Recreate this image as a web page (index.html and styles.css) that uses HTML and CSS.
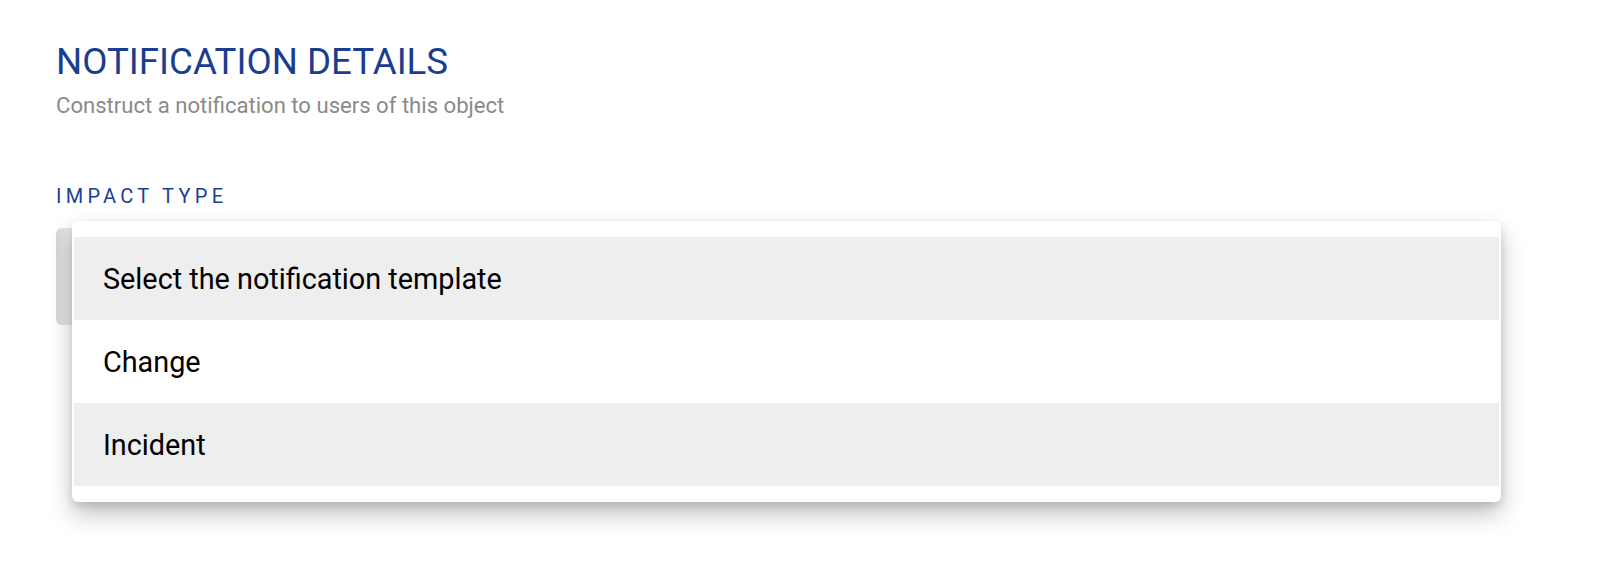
FILE: index.html
```html
<!DOCTYPE html>
<html lang="en">
<head>
<meta charset="utf-8">
<title>Notification details</title>
<link rel="stylesheet" href="styles.css">
</head>
<body>
<main class="page">
  <h1 class="title">NOTIFICATION DETAILS</h1>
  <p class="subtitle">Construct a notification to users of this object</p>
  <section class="field">
    <label class="field-label">IMPACT TYPE</label>
    <div class="select-wrap">
      <div class="select"></div>
      <ul class="menu">
        <li class="menu-item shaded">Select the notification template</li>
        <li class="menu-item">Change</li>
        <li class="menu-item shaded">Incident</li>
      </ul>
    </div>
  </section>
</main>
</body>
</html>
```
FILE: styles.css
```css
* { box-sizing: border-box; }
html, body { margin: 0; padding: 0; background: #fff; }
body { font-family: Roboto, "Noto Sans", "Liberation Sans", sans-serif; }
.page { padding: 40px 0 0 56px; min-height: 574px; }
.title {
  margin: 0;
  font-size: 36.7px;
  line-height: 44px;
  font-weight: 400;
  color: #1a3e8d;
}
.subtitle {
  margin: 8px 0 0;
  font-size: 22.1px;
  line-height: 26px;
  color: #8a8a8a;
}
.field { margin-top: 66px; }
.field-label {
  display: block;
  font-size: 20px;
  line-height: 24px;
  letter-spacing: 4.3px;
  color: #1c3f94;
}
.select-wrap { position: relative; margin-top: 20px; width: 1445px; }
.select {
  height: 97px;
  border-radius: 6px;
  background: linear-gradient(to right, #d6d6d6, #e9e9e9 14px, #ececec);
}
.menu {
  position: absolute;
  top: -7px;
  left: 16px;
  width: 1429px;
  margin: 0;
  padding: 16px 2px;
  list-style: none;
  background: #fff;
  border-radius: 6px;
  box-shadow: 0 12px 24px rgba(0,0,0,0.24), 0 4px 8px rgba(0,0,0,0.12);
}
.menu-item {
  display: flex;
  align-items: center;
  height: 83px;
  padding-left: 29px;
  font-size: 28.8px;
  color: #000;
}
.menu-item.shaded { background: #eeeeee; }
```
